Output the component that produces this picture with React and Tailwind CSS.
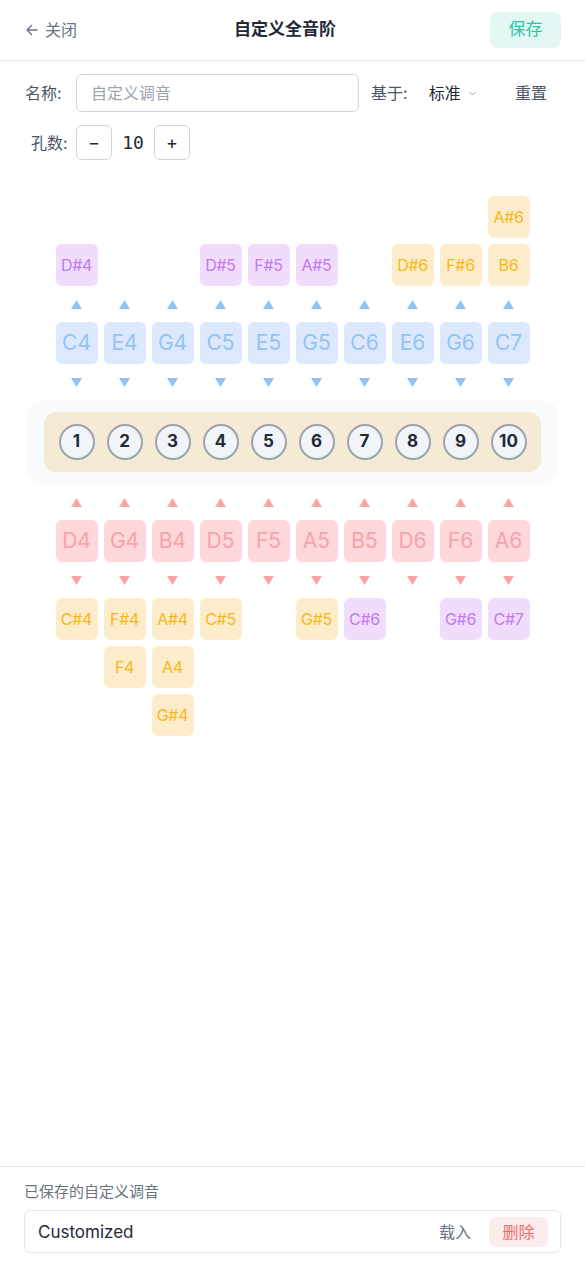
import React from "react";

const FONT = { fontFamily: 'Inter, "Noto Sans CJK SC", sans-serif' };

// column data: top bends (top to bottom), blow, draw, bottom bends (top to bottom)
const columns = [
  { up: ["D#4"], blow: "C4", draw: "D4", down: ["C#4"] },
  { up: [], blow: "E4", draw: "G4", down: ["F#4", "F4"] },
  { up: [], blow: "G4", draw: "B4", down: ["A#4", "A4", "G#4"] },
  { up: ["D#5"], blow: "C5", draw: "D5", down: ["C#5"] },
  { up: ["F#5"], blow: "E5", draw: "F5", down: [] },
  { up: ["A#5"], blow: "G5", draw: "A5", down: ["G#5"] },
  { up: [], blow: "C6", draw: "B5", down: ["C#6"] },
  { up: ["D#6"], blow: "E6", draw: "D6", down: [] },
  { up: ["F#6"], blow: "G6", draw: "F6", down: ["G#6"] },
  { up: ["A#6", "B6"], blow: "C7", draw: "A6", down: ["C#7"] },
];

const purple = new Set(["D#4", "D#5", "F#5", "A#5", "C#6", "G#6", "C#7"]);

const Bend = ({ note }) => {
  const isPurple = purple.has(note);
  return (
    <div
      className={`w-[42px] h-[42px] rounded-md flex items-center justify-center text-[16px] tracking-[-0.3px] ${
        isPurple ? "bg-[#f1dcfd] text-[#bf7af0]" : "bg-[#fdeccb] text-[#f4b919]"
      }`}
    >
      {note}
    </div>
  );
};

const Arrow = ({ dir, color }) => (
  <div className="h-[36px] flex items-center justify-center">
    <svg width="11" height="9" viewBox="0 0 11 9">
      {dir === "up" ? (
        <polygon points="5.5,0 11,9 0,9" fill={color} />
      ) : (
        <polygon points="0,0 11,0 5.5,9" fill={color} />
      )}
    </svg>
  </div>
);

const Grid = ({ children, className = "" }) => (
  <div className={`mx-auto grid grid-cols-[repeat(10,42px)] gap-x-[6px] w-[474px] ${className}`}>
    {children}
  </div>
);

export default function App() {
  return (
    <div className="min-h-screen w-[585px] bg-white flex flex-col text-[#374151]" style={FONT}>
      {/* Header */}
      <div className="h-[61px] border-b border-[#e5e7eb] flex items-center justify-between pl-[25px] pr-[24px]">
        <div className="flex items-center gap-[6px] text-[16px] text-[#6b7280] w-[100px]">
          <svg width="14" height="14" viewBox="0 0 14 14" fill="none" stroke="#6b7280" strokeWidth="1.4" strokeLinecap="round" strokeLinejoin="round">
            <path d="M12 7H2M6.5 2.5L2 7l4.5 4.5" />
          </svg>
          关闭
        </div>
        <div className="text-[17px] font-bold text-[#1f2937]">自定义全音阶</div>
        <div className="w-[116px] flex justify-end">
          <button className="w-[71px] h-[36px] rounded-lg bg-[#e3f8f4] text-[#2ec4a6] text-[17px]">保存</button>
        </div>
      </div>

      {/* Form */}
      <div className="pl-[25px] pr-[24px] pt-[13px]">
        <div className="flex items-center h-[38px]">
          <span className="text-[16px] text-[#4b5563] w-[51px]">名称:</span>
          <div className="w-[283px] h-[38px] border border-[#d1d5db] rounded-md flex items-center pl-[14px] text-[16px] text-[#9ca3af]">
            自定义调音
          </div>
          <span className="ml-[12px] text-[16px] text-[#4b5563]">基于:</span>
          <span className="ml-[21px] text-[16px] text-[#1f2937]">标准</span>
          <svg className="ml-[7px]" width="9" height="9" viewBox="0 0 9 9" fill="none" stroke="#9ca3af" strokeWidth="1">
            <path d="M1.5 3l3 3 3-3" />
          </svg>
          <span className="ml-auto mr-[14px] text-[16px] text-[#4b5563]">重置</span>
        </div>
        <div className="flex items-center h-[35px] mt-[13px] pl-[6px]">
          <span className="text-[16px] text-[#4b5563] w-[45px]">孔数:</span>
          <button className="w-[36px] h-[35px] border border-[#d1d5db] rounded-md text-[18px] text-[#1f2937] flex items-center justify-center">−</button>
          <span className="w-[42px] text-center text-[18px] text-[#1f2937]" style={{ fontFamily: '"DejaVu Sans Mono", monospace' }}>10</span>
          <button className="w-[36px] h-[35px] border border-[#d1d5db] rounded-md text-[18px] text-[#1f2937] flex items-center justify-center">+</button>
        </div>
      </div>

      {/* Top bends */}
      <Grid className="mt-[36px] items-end">
        {columns.map((c, i) => (
          <div key={i} className="flex flex-col gap-[6px]">
            {c.up.map((n) => (
              <Bend key={n} note={n} />
            ))}
          </div>
        ))}
      </Grid>
      <Grid>
        {columns.map((c, i) => (
          <Arrow key={i} dir="up" color="#93c3f5" />
        ))}
      </Grid>
      <Grid>
        {columns.map((c, i) => (
          <div key={i} className="w-[42px] h-[42px] rounded-md bg-[#dbe8fe] text-[#93c3f5] flex items-center justify-center text-[21px]">
            {c.blow}
          </div>
        ))}
      </Grid>
      <Grid>
        {columns.map((c, i) => (
          <Arrow key={i} dir="down" color="#93c3f5" />
        ))}
      </Grid>

      {/* Harmonica */}
      <div className="mx-auto w-[531px] bg-[#f8fafc] rounded-2xl px-[17px] py-[12px]">
        <div className="h-[60px] bg-[#f5ead4] rounded-xl flex items-center justify-center gap-[12px]">
          {columns.map((c, i) => (
            <div key={i} className="w-[36px] h-[36px] rounded-full border-[2.5px] border-[#9ca3af] bg-[#f1f4f8] flex items-center justify-center text-[17px] font-bold text-[#1f2937]">
              {i + 1}
            </div>
          ))}
        </div>
      </div>

      {/* Draw side */}
      <Grid>
        {columns.map((c, i) => (
          <Arrow key={i} dir="up" color="#f8a4ab" />
        ))}
      </Grid>
      <Grid>
        {columns.map((c, i) => (
          <div key={i} className="w-[42px] h-[42px] rounded-md bg-[#fdd7da] text-[#f7a3a9] flex items-center justify-center text-[21px]">
            {c.draw}
          </div>
        ))}
      </Grid>
      <Grid>
        {columns.map((c, i) => (
          <Arrow key={i} dir="down" color="#f8a4ab" />
        ))}
      </Grid>
      <Grid className="items-start">
        {columns.map((c, i) => (
          <div key={i} className="flex flex-col gap-[6px]">
            {c.down.map((n) => (
              <Bend key={n} note={n} />
            ))}
          </div>
        ))}
      </Grid>

      <div className="flex-1" />

      {/* Saved list */}
      <div className="border-t border-[#e5e7eb] pl-[24px] pr-[24px] pt-[15px] pb-[13px]">
        <div className="text-[15px] text-[#6b7280] leading-[20px]">已保存的自定义调音</div>
        <div className="mt-[8px] h-[43px] border border-[#e5e7eb] rounded-md flex items-center pl-[13px] pr-[12px]">
          <span className="text-[17px] text-[#1f2937] mt-[2px]">Customized</span>
          <span className="ml-auto text-[16px] text-[#6b7280]">载入</span>
          <span className="ml-[18px] w-[59px] h-[30px] rounded-md bg-[#fdecec] text-[#ef6b6b] text-[16px] flex items-center justify-center">删除</span>
        </div>
      </div>
    </div>
  );
}
